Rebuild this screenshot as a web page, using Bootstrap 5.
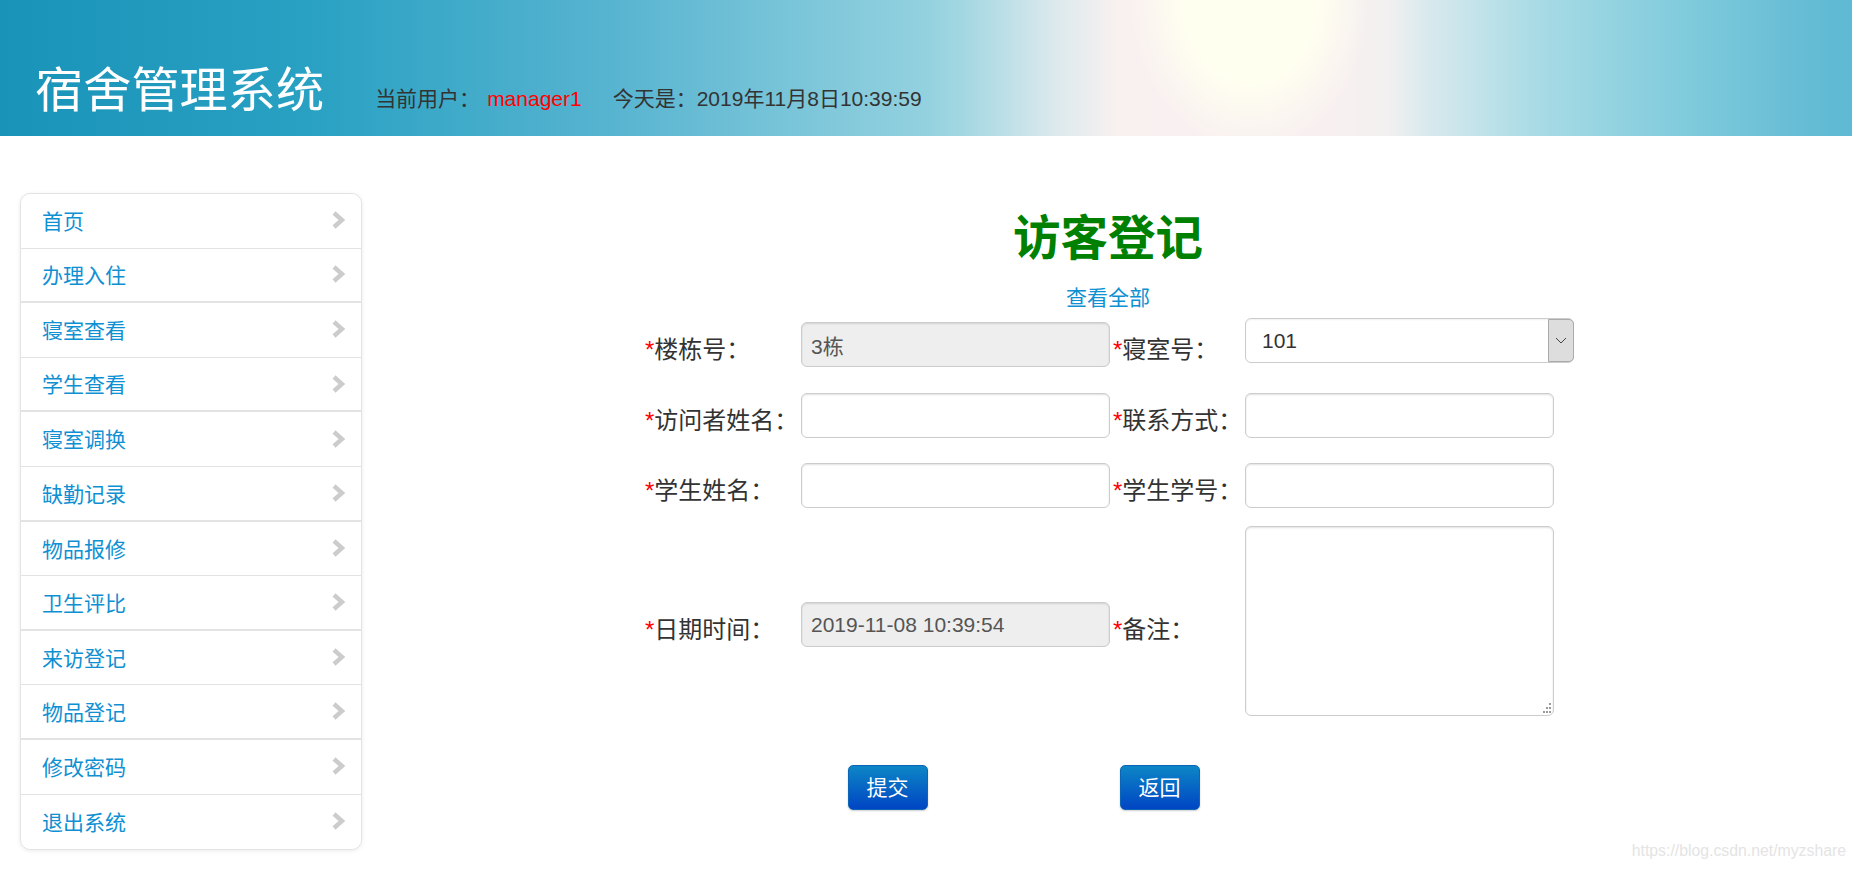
<!DOCTYPE html>
<html lang="zh">
<head>
<meta charset="utf-8">
<title>访客登记</title>
<link href="https://cdn.jsdelivr.net/npm/bootstrap@5.3.0/dist/css/bootstrap.min.css" rel="stylesheet">
<style>
html,body{height:100%}
body{font-family:"Liberation Sans","Noto Sans CJK SC",sans-serif;font-size:21px;color:#333;background:#fff;overflow:hidden}
.top-band{height:136px;padding:0 0 15px 35px;background:
 radial-gradient(ellipse 120px 150px at 1250px 0,#fffff0 0%,#fffff0 55%,rgba(255,255,240,0) 100%),
 linear-gradient(90deg,#1a93b9 0%,#27a0c2 16%,#57b4d0 33%,#93d1df 50%,#a3d7e2 52%,#dce9ed 57%,#f9f1f0 60.4%,#f8f0f0 72%,#f2f0f0 75%,#dbeaee 76.8%,#a8dbe5 83%,#80cbdc 91%,#63bbd4 98%,#5fb9d3 100%)}
.sys-title{font-size:48.2px;line-height:62px;color:#fff;font-weight:400;margin:0 51px 0 0}
.sys-info{line-height:30px;margin-bottom:7px;white-space:nowrap}
.sys-user{color:#f00;margin:0 31px 0 7px}
.side-col{width:342px;margin:57px 0 0 20px;flex:none}
.side-menu{border:1px solid #e3e3e3;border-radius:10px;box-shadow:0 1px 4px rgba(0,0,0,.08);overflow:hidden}
.side-item{height:54.6px;padding:2px 16px 0 21px;border:0;border-bottom:1px solid #e3e3e3;color:#0e90d2;font-size:21px}
.side-item:nth-child(even){border-bottom-width:2px}
.side-item:last-child{border-bottom:0}
.side-item svg{width:14px;height:18px;margin-top:-3px}
.form-zone{padding:78px 0 0 2px}
.form-head{font-size:47.5px;line-height:50px;font-weight:700;color:green;margin:0 0 19px}
.all-link{display:block;line-height:30px;height:35px;color:#0e90d2;text-decoration:none;font-size:21px}
.visit-grid{display:grid;width:930px;margin:0 auto;padding-left:4px;box-sizing:content-box;grid-template-columns:156px 312px 132px 330px;grid-template-rows:71px 70px 67px 190px;text-align:left}
.f-label{margin-top:17px;font-size:24px;line-height:30px;white-space:nowrap;color:#333}
.star{color:#f00}
.f-input{width:309px;height:45px;margin-top:4px;padding:4px 9px;border:1px solid #ccc;border-radius:6px;font-size:21px;color:#555;background:#fff;box-shadow:inset 0 1px 2px rgba(0,0,0,.12)}
.f-input[readonly]{background:#eee}
.row-tall{display:contents}
.row-tall>*{align-self:center}
.row-tall .f-label{margin-top:17px}
.row-tall .f-input{margin-top:7px}
.f-area{display:block;width:309px;height:190px;margin:0;padding:4px 8px;border:1px solid #ccc;border-radius:6px;box-shadow:inset 0 1px 2px rgba(0,0,0,.12);resize:none}
.area-wrap{width:309px;height:190px}
.grip{position:absolute;right:2px;bottom:2px;width:12px;height:12px;pointer-events:none}
.sel-wrap{width:329px;height:45px}
.f-select{width:100%;height:45px;padding:0 40px 0 16px;border:1px solid #ccc;border-radius:6px;appearance:none;background:#fff;font-size:21px;color:#333;box-shadow:inset 0 1px 2px rgba(0,0,0,.06)}
.sel-btn{position:absolute;top:1px;right:0;width:26px;height:43px;background:#ddd;border:1px solid #aaa;border-radius:0 5px 5px 0;pointer-events:none}
.sel-btn svg{width:12px;height:7px}
.act-row{gap:192px;margin:49px 169px 0 0}
.act-btn{width:80px;height:45px;padding:0;font-size:21px;color:#fff;border:1px solid #0b66b8;border-radius:5px;background:linear-gradient(#0d86c6,#0045c4);box-shadow:0 1px 2px rgba(0,0,0,.2)}
.mark-text{position:absolute;right:6px;bottom:9px;font-size:15.8px;line-height:20px;color:#e4e4e4}
</style>
</head>
<body class="position-relative">
<header class="top-band d-flex align-items-end">
  <h1 class="sys-title">宿舍管理系统</h1>
  <div class="sys-info">当前用户：<span class="sys-user">manager1</span>今天是：2019年11月8日10:39:59</div>
</header>
<div class="d-flex">
  <aside class="side-col">
    <div class="list-group side-menu">
      <a href="#" class="list-group-item side-item d-flex justify-content-between align-items-center">首页<svg viewBox="0 0 14 18"><path d="M3 2l8 7-8 7" fill="none" stroke="#ccc" stroke-width="4.4"/></svg></a>
      <a href="#" class="list-group-item side-item d-flex justify-content-between align-items-center">办理入住<svg viewBox="0 0 14 18"><path d="M3 2l8 7-8 7" fill="none" stroke="#ccc" stroke-width="4.4"/></svg></a>
      <a href="#" class="list-group-item side-item d-flex justify-content-between align-items-center">寝室查看<svg viewBox="0 0 14 18"><path d="M3 2l8 7-8 7" fill="none" stroke="#ccc" stroke-width="4.4"/></svg></a>
      <a href="#" class="list-group-item side-item d-flex justify-content-between align-items-center">学生查看<svg viewBox="0 0 14 18"><path d="M3 2l8 7-8 7" fill="none" stroke="#ccc" stroke-width="4.4"/></svg></a>
      <a href="#" class="list-group-item side-item d-flex justify-content-between align-items-center">寝室调换<svg viewBox="0 0 14 18"><path d="M3 2l8 7-8 7" fill="none" stroke="#ccc" stroke-width="4.4"/></svg></a>
      <a href="#" class="list-group-item side-item d-flex justify-content-between align-items-center">缺勤记录<svg viewBox="0 0 14 18"><path d="M3 2l8 7-8 7" fill="none" stroke="#ccc" stroke-width="4.4"/></svg></a>
      <a href="#" class="list-group-item side-item d-flex justify-content-between align-items-center">物品报修<svg viewBox="0 0 14 18"><path d="M3 2l8 7-8 7" fill="none" stroke="#ccc" stroke-width="4.4"/></svg></a>
      <a href="#" class="list-group-item side-item d-flex justify-content-between align-items-center">卫生评比<svg viewBox="0 0 14 18"><path d="M3 2l8 7-8 7" fill="none" stroke="#ccc" stroke-width="4.4"/></svg></a>
      <a href="#" class="list-group-item side-item d-flex justify-content-between align-items-center">来访登记<svg viewBox="0 0 14 18"><path d="M3 2l8 7-8 7" fill="none" stroke="#ccc" stroke-width="4.4"/></svg></a>
      <a href="#" class="list-group-item side-item d-flex justify-content-between align-items-center">物品登记<svg viewBox="0 0 14 18"><path d="M3 2l8 7-8 7" fill="none" stroke="#ccc" stroke-width="4.4"/></svg></a>
      <a href="#" class="list-group-item side-item d-flex justify-content-between align-items-center">修改密码<svg viewBox="0 0 14 18"><path d="M3 2l8 7-8 7" fill="none" stroke="#ccc" stroke-width="4.4"/></svg></a>
      <a href="#" class="list-group-item side-item d-flex justify-content-between align-items-center">退出系统<svg viewBox="0 0 14 18"><path d="M3 2l8 7-8 7" fill="none" stroke="#ccc" stroke-width="4.4"/></svg></a>
    </div>
  </aside>
  <main class="form-zone flex-grow-1 text-center">
    <h2 class="form-head">访客登记</h2>
    <a href="#" class="all-link">查看全部</a>
    <form>
      <div class="visit-grid">
        <label class="f-label"><span class="star">*</span>楼栋号：</label>
        <div><input class="f-input" value="3栋" readonly></div>
        <label class="f-label"><span class="star">*</span>寝室号：</label>
        <div class="sel-wrap position-relative">
          <select class="f-select"><option>101</option></select>
          <span class="sel-btn d-flex align-items-center justify-content-center"><svg viewBox="0 0 12 7"><path d="M1 1l5 5 5-5" fill="none" stroke="#444" stroke-width="1"/></svg></span>
        </div>
        <label class="f-label"><span class="star">*</span>访问者姓名：</label>
        <div><input class="f-input"></div>
        <label class="f-label"><span class="star">*</span>联系方式：</label>
        <div><input class="f-input"></div>
        <label class="f-label"><span class="star">*</span>学生姓名：</label>
        <div><input class="f-input"></div>
        <label class="f-label"><span class="star">*</span>学生学号：</label>
        <div><input class="f-input"></div>
        <div class="row-tall">
          <label class="f-label"><span class="star">*</span>日期时间：</label>
          <div><input class="f-input" value="2019-11-08 10:39:54" readonly></div>
          <label class="f-label"><span class="star">*</span>备注：</label>
          <div class="area-wrap position-relative">
            <textarea class="f-area"></textarea>
            <svg class="grip" viewBox="0 0 12 12"><path d="M9 1h2v2H9zM6 5h2v2H6zM9 5h2v2H9zM3 9h2v2H3zM6 9h2v2H6zM9 9h2v2H9z" fill="#999"/></svg>
          </div>
        </div>
      </div>
      <div class="act-row d-flex justify-content-center">
        <button type="button" class="btn act-btn">提交</button>
        <button type="button" class="btn act-btn">返回</button>
      </div>
    </form>
  </main>
</div>
<div class="mark-text">https://blog.csdn.net/myzshare</div>
<script src="https://cdn.jsdelivr.net/npm/bootstrap@5.3.0/dist/js/bootstrap.bundle.min.js"></script>
</body>
</html>
